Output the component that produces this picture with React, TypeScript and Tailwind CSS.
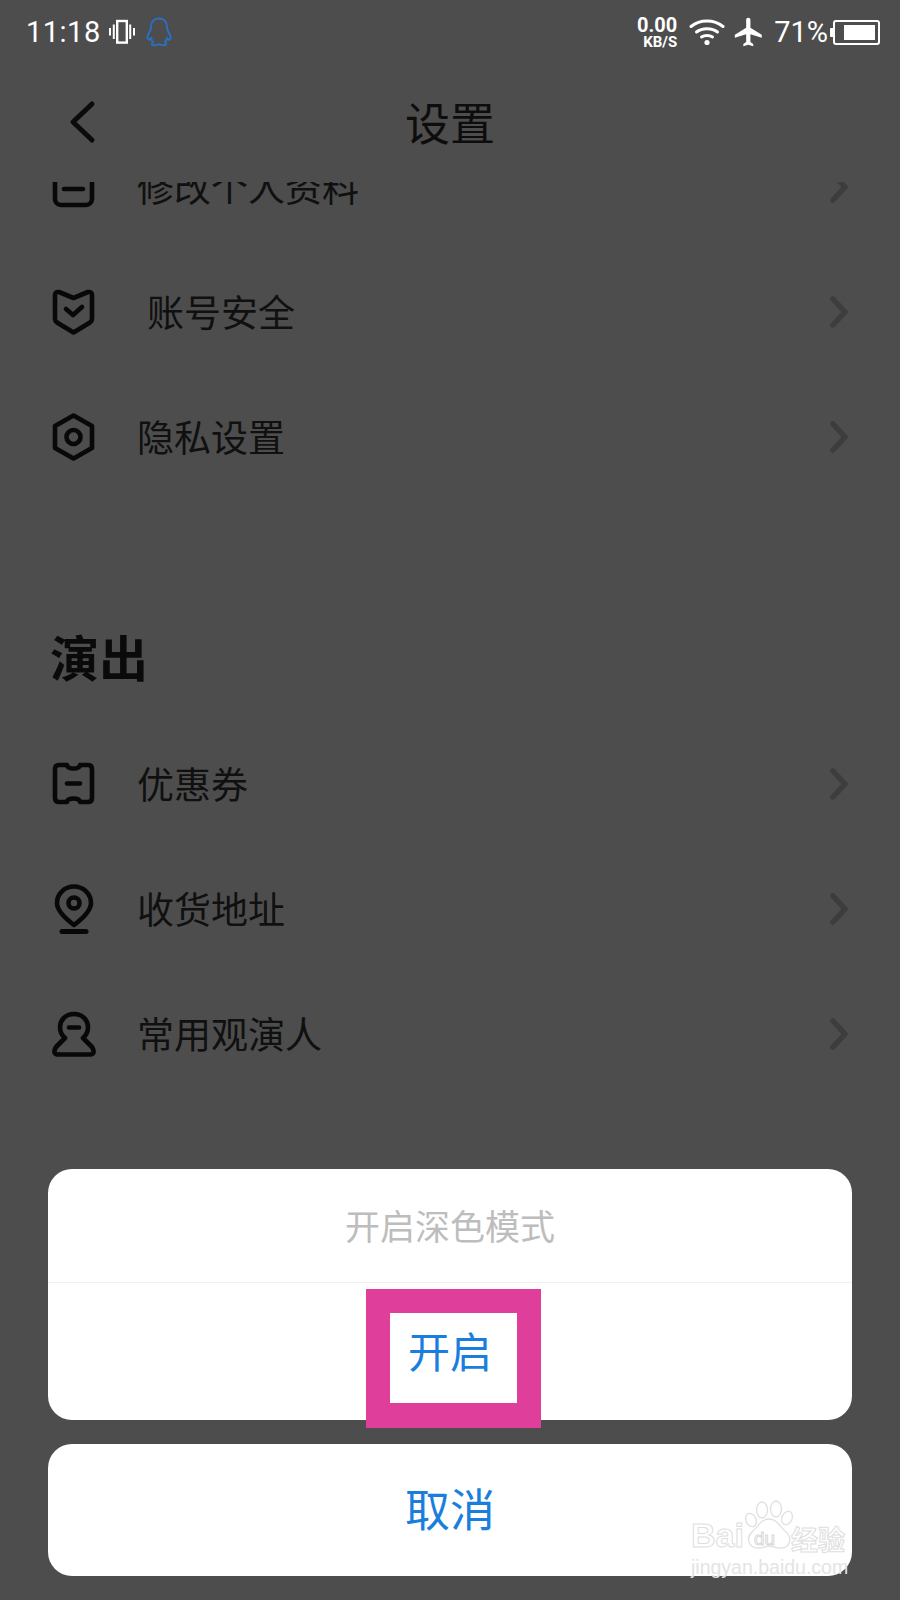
import type { ReactNode } from "react";

const cjk = "font-['Noto_Sans_CJK_SC','Noto_Sans',sans-serif]";

function Chevron() {
  return (
    <svg width="18" height="32" viewBox="0 0 18 32" fill="none" stroke="#3d3d3d" strokeWidth="5.5" strokeLinecap="round" strokeLinejoin="round">
      <path d="M3 3 L15 16 L3 29" />
    </svg>
  );
}

function ShieldIcon() {
  return (
    <svg width="44" height="46" viewBox="0 0 44 46" fill="none" stroke="#080808" strokeWidth="4.6" strokeLinecap="round" strokeLinejoin="round">
      <path d="M3 6 Q3 2.500 7 3 L21.500 9 L36 3 Q40 2.500 40 6 V30 Q40 32 38 33.500 L21.500 43.500 L5 33.500 Q3 32 3 30 Z" />
      <path d="M14 20 L21 26 L30 18" />
    </svg>
  );
}

function HexIcon() {
  return (
    <svg width="44" height="48" viewBox="0 0 44 48" fill="none" stroke="#080808" strokeWidth="4.6" strokeLinejoin="round">
      <path d="M21.500 2.500 L40 13 V35 L21.500 45.500 L3 35 V13 Z" />
      <circle cx="21.500" cy="24" r="7" />
    </svg>
  );
}

function TicketIcon() {
  return (
    <svg width="44" height="44" viewBox="0 0 44 44" fill="none" stroke="#080808" strokeWidth="4.6" strokeLinecap="round" strokeLinejoin="round">
      <path d="M7 3 H15 Q15.500 6.500 21.500 6.500 Q27.500 6.500 28 3 H36 Q40 3 40 7 V36 Q40 40 36 40 H28 Q27.500 36.500 21.500 36.500 Q15.500 36.500 15 40 H7 Q3 40 3 36 V7 Q3 3 7 3 Z" />
      <path d="M15 21.500 H28" />
    </svg>
  );
}

function PinIcon() {
  return (
    <svg width="44" height="50" viewBox="0 0 44 50" fill="none" stroke="#080808" strokeWidth="4.6" strokeLinecap="round" strokeLinejoin="round">
      <path d="M22 2.500 C12.500 2.500 5 10 5 19 C5 27 14 35 22 41 C30 35 39 27 39 19 C39 10 31.500 2.500 22 2.500 Z" />
      <circle cx="22" cy="19" r="5.500" />
      <path d="M10 47.500 H34" strokeWidth="5" />
    </svg>
  );
}

function PersonIcon() {
  return (
    <svg width="44" height="46" viewBox="0 0 44 46" fill="none" stroke="#080808" strokeWidth="4.6" strokeLinecap="round" strokeLinejoin="round">
      <path d="M22 3 C13 3 8 9.500 8 16 C8 21 10 24.500 13 27 L4 36 Q0 43 6 43.500 H38 Q44 43 40 36 L31 27 C34 24.500 36 21 36 16 C36 9.500 31 3 22 3 Z" />
      <path d="M17 16.500 H27" />
    </svg>
  );
}

function DocIcon() {
  return (
    <svg width="44" height="44" viewBox="0 0 44 44" fill="none" stroke="#080808" strokeWidth="4.6" strokeLinecap="round" strokeLinejoin="round">
      <rect x="3" y="3" width="37" height="37" rx="6" />
      <path d="M12 24 H31" />
    </svg>
  );
}

function Row({ icon, label, indent }: { icon: ReactNode; label: string; indent?: boolean }) {
  return (
    <div className="flex h-[125px] items-center pl-[52px] pr-[52px]">
      <div className="flex w-[44px] items-center justify-center">{icon}</div>
      <span className={`ml-[41px] flex-1 text-[37px] leading-none text-[#101010] ${indent ? "pl-[10px]" : ""}`}>{label}</span>
      <Chevron />
    </div>
  );
}

function StatusBar() {
  return (
    <div className="flex h-[64px] items-center justify-between pl-[26px] pr-[20px] font-['Roboto',sans-serif] text-white">
      <div className="flex items-center">
        <span className="text-[29px] leading-none tracking-[0.5px]">11:18</span>
        <svg className="ml-[8px]" width="26" height="26" viewBox="0 0 26 26" fill="none" stroke="#fff">
          <rect x="8.200" y="2" width="9.600" height="21.600" strokeWidth="2.400" />
          <path d="M4.800 5.500 V20 M21.200 5.500 V20" strokeWidth="2" />
          <path d="M1 9 V16.500 M25 9 V16.500" strokeWidth="2" />
        </svg>
        <svg className="ml-[11px]" width="26" height="30" viewBox="0 0 26 30" fill="none" stroke="#2b6fc2" strokeWidth="2" strokeLinejoin="round">
          <path d="M13 1.500 C7.500 1.500 5 5.500 5 10 C5 12.500 4.500 13.500 3 16 C1.500 18.500 1 21.500 2.500 22.500 C3.500 23 4.500 22 5 21 C5.500 23 6 24 7 25 C5.500 26 5 27.500 7 28 C9 28.500 11.500 28 13 27 C14.500 28 17 28.500 19 28 C21 27.500 20.500 26 19 25 C20 24 20.500 23 21 21 C21.500 22 22.500 23 23.500 22.500 C25 21.500 24.500 18.500 23 16 C21.500 13.500 21 12.500 21 10 C21 5.500 18.500 1.500 13 1.500 Z" />
        </svg>
      </div>
      <div className="flex items-center">
        <div className="flex flex-col items-end font-bold leading-none">
          <span className="text-[20px] leading-[20px]">0.00</span>
          <span className="text-[15px] leading-[15px]">KB/S</span>
        </div>
        <svg className="ml-[12px]" width="36" height="28" viewBox="0 0 36 28" fill="none" stroke="#fff" strokeWidth="3" strokeLinecap="round">
          <path d="M2 8.500 C11 1 25 1 34 8.500" />
          <path d="M7.500 14 C13 9.500 23 9.500 28.500 14" />
          <path d="M12.500 19 C15.500 17 20.500 17 23.500 19" />
          <circle cx="18" cy="24.500" r="2.600" fill="#fff" stroke="none" />
        </svg>
        <svg className="ml-[7px]" width="34" height="34" viewBox="0 0 24 24" fill="#fff">
          <path d="M21 16v-2l-8-5V3.500c0-.83-.67-1.500-1.500-1.500S10 2.670 10 3.500V9l-8 5v2l8-2.500V19l-2 1.500V22l3.500-1 3.500 1v-1.500L13 19v-5.500l8 2.500z" />
        </svg>
        <span className="ml-[8px] text-[29px] leading-none">71%</span>
        <div className="ml-[2px] flex items-center">
          <div className="h-[9px] w-[3px] rounded-l-[1px] bg-white" />
          <div className="flex h-[25px] w-[47px] items-center justify-end rounded-[3px] border-2 border-white pr-[3px]">
            <div className="h-[15px] w-[31px] bg-white" />
          </div>
        </div>
      </div>
    </div>
  );
}

function Watermark() {
  return (
    <div className="pointer-events-none absolute left-[691px] top-[1500px] w-[165px] font-['Liberation_Sans',sans-serif] text-[#e4e4e4]">
      <svg className="absolute left-[50px] top-0" width="56" height="52" viewBox="0 0 56 52" fill="none" stroke="#e0e0e0" strokeWidth="1.300">
        <ellipse cx="21" cy="10" rx="5.500" ry="8" />
        <ellipse cx="35" cy="9" rx="5.500" ry="8" />
        <ellipse cx="10" cy="20" rx="5" ry="7" transform="rotate(-25 10 20)" />
        <ellipse cx="46" cy="18" rx="5" ry="7" transform="rotate(25 46 18)" />
        <path d="M28 19 C20 19 17 27 11 32 C5 37 7 48 17 48 C22 48 25 46 28 46 C31 46 35 48 40 48 C50 48 51 37 45 32 C39 27 36 19 28 19 Z" />
      </svg>
      <div className="relative flex h-[54px] items-end pb-[2px]">
        <span className="text-[34px] font-bold leading-none text-transparent [-webkit-text-stroke:1px_#dedede]">Bai</span>
        <span className="ml-[10px] text-[19px] leading-[27px] text-transparent [-webkit-text-stroke:1px_#dadada]">du</span>
        <span className={`${cjk} ml-[16px] text-[27px] font-bold leading-none text-transparent [-webkit-text-stroke:1px_#dedede]`}>经验</span>
      </div>
      <div className="mt-[2px] whitespace-nowrap text-[19.500px] leading-[22px]">jingyan.baidu.com</div>
    </div>
  );
}

export default function App() {
  return (
    <div className={`${cjk} relative h-[1600px] w-[900px] overflow-hidden bg-[#4d4d4d]`}>
      <StatusBar />

      {/* Title bar */}
      <div className="relative flex h-[118px] items-start justify-center pt-[34px]">
        <svg className="absolute left-[68px] top-[36px]" width="30" height="44" viewBox="0 0 30 44" fill="none" stroke="#0b0b0b" strokeWidth="5" strokeLinecap="round" strokeLinejoin="round">
          <path d="M24 4 L5 22 L24 40" />
        </svg>
        <span className="text-[45px] leading-[48px] text-[#0d0d0d]">设置</span>
      </div>

      {/* Scrolled list, first row is cut by the title bar */}
      <div className="h-[1418px] overflow-hidden">
        <div className="-mt-[58px]">
          <Row icon={<DocIcon />} label="修改个人资料" />
          <Row icon={<ShieldIcon />} label="账号安全" indent />
          <Row icon={<HexIcon />} label="隐私设置" />
          <div className="flex h-[222px] items-end pb-[35px] pl-[50px] text-[49px] font-bold leading-[60px] text-[#0a0a0a]">演出</div>
          <Row icon={<TicketIcon />} label="优惠券" />
          <Row icon={<PinIcon />} label="收货地址" />
          <Row icon={<PersonIcon />} label="常用观演人" />
        </div>
      </div>

      {/* Action sheet */}
      <div className="absolute bottom-[24px] left-[48px] flex w-[804px] flex-col gap-[24px]">
        <div className="relative rounded-[24px] bg-white">
          <div className="flex h-[114px] items-center justify-center border-b border-[#f1f1f1] text-[35px] text-[#bdbdbd]">开启深色模式</div>
          <div className="flex h-[137px] items-center justify-center pb-[5px] text-[42px] text-[#1a7fdc]">开启</div>
          <div className="absolute left-[318px] top-[120px] h-[139px] w-[175px] border-x-[24px] border-b-[25px] border-t-[24px] border-[#df3f9b]" />
        </div>
        <div className="flex h-[132px] items-center justify-center rounded-[24px] bg-white pb-[4px] text-[45px] text-[#1a7fdc]">取消</div>
      </div>

      <Watermark />
    </div>
  );
}
